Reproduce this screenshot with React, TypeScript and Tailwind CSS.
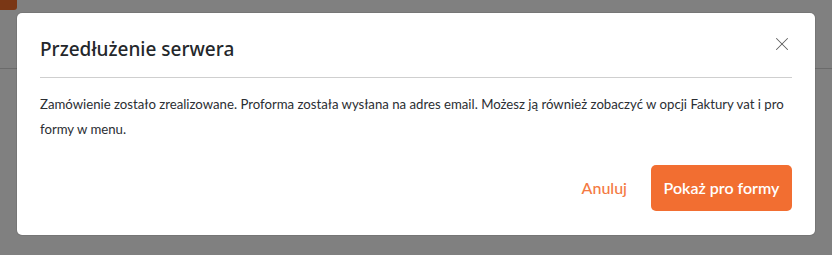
import { X } from "lucide-react";

export default function App() {
  return (
    <div className="relative w-[832px] h-[255px] overflow-hidden bg-[#808080]">
      {/* Page behind the overlay */}
      <div className="h-[69px] border-b border-[#6b6b6b]">
        <div className="w-[17px] h-[10px] bg-[#7a3715] rounded-br-[3px]" />
      </div>

      {/* Modal */}
      <div
        className="absolute left-[17px] top-[13px] w-[798px] h-[222px] bg-white rounded-[5px] shadow-[0_0_0_1px_rgba(0,0,0,0.08)]"
        style={{ fontFamily: 'Lato, "Noto Sans", sans-serif' }}
      >
        <div className="mx-[23px] pt-[22px] pb-[14px] border-b border-[#cfcfcf] flex items-start justify-between">
          <h2
            className="text-[19px] leading-[28px] font-medium text-[#24272b]"
            style={{ fontFamily: '"Noto Sans", sans-serif' }}
          >
            Przedłużenie serwera
          </h2>
          <button className="-mt-[2px] -mr-[1px] text-[#5f5f5f]">
            <X size={22} strokeWidth={1.1} />
          </button>
        </div>

        <div className="mx-[23px] pt-[14px] text-[13.2px] leading-[25px] text-[#2b2e33]">
          Zamówienie zostało zrealizowane. Proforma została wysłana na adres email. Możesz ją również zobaczyć w opcji Faktury vat i pro formy w menu.
        </div>

        <div className="mx-[23px] mt-[23px] flex items-center justify-end gap-[24px]">
          <button className="text-[16px] text-[#f47a43] font-medium">Anuluj</button>
          <button className="h-[46px] w-[141px] rounded-[5px] bg-[#f26e31] text-white text-[16px] font-semibold">
            Pokaż pro formy
          </button>
        </div>
      </div>
    </div>
  );
}
